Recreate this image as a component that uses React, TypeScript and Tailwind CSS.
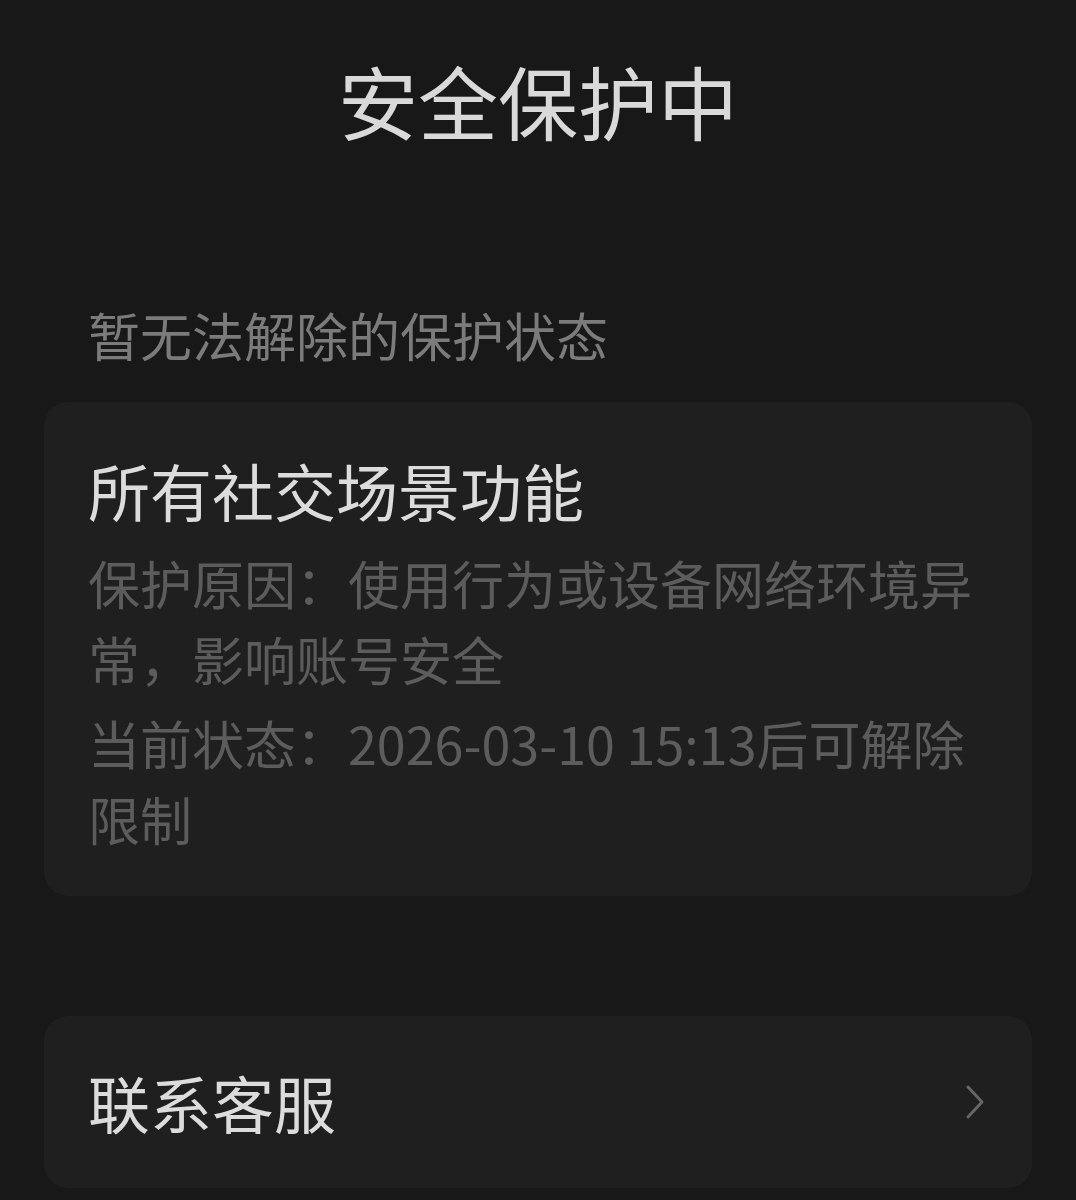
import React from "react";

const font = {
  fontFamily: '"Noto Sans CJK SC", "Noto Sans", sans-serif',
};

function ChevronRight() {
  return (
    <svg width="22" height="36" viewBox="0 0 22 36" fill="none">
      <path
        d="M4 3 L18 18 L4 33"
        stroke="#666666"
        strokeWidth="3"
        strokeLinecap="round"
        strokeLinejoin="round"
      />
    </svg>
  );
}

export default function App() {
  return (
    <div
      className="min-h-[1200px] w-full bg-[#181818] px-[44px] pt-[59px]"
      style={font}
    >
      <h1 className="text-center text-[80px] leading-[80px] font-normal text-[#d9d9d9]">
        安全保护中
      </h1>

      <div className="mt-[170px] pl-[44px] text-[52px] leading-[52px] text-[#7b7b7b]">
        暂无法解除的保护状态
      </div>

      <div className="mt-[41px] rounded-[24px] bg-[#1f1f1f] px-[44px] pt-[57px] pb-[39px]">
        <div className="text-[62px] leading-[62px] text-[#dcdcdc]">
          所有社交场景功能
        </div>
        <p className="mt-[24px] text-[52px] leading-[76px] text-[#5c5c5c]">
          保护原因：使用行为或设备网络环境异常，影响账号安全
        </p>
        <p className="mt-[8px] text-[52px] leading-[76px] text-[#5c5c5c]">
          当前状态：2026-03-10 15:13后可解除限制
        </p>
      </div>

      <div className="mt-[120px] flex h-[172px] items-center justify-between rounded-[24px] bg-[#1f1f1f] pl-[44px] pr-[46px]">
        <span className="text-[62px] leading-[62px] text-[#dcdcdc]">联系客服</span>
        <ChevronRight />
      </div>
    </div>
  );
}
